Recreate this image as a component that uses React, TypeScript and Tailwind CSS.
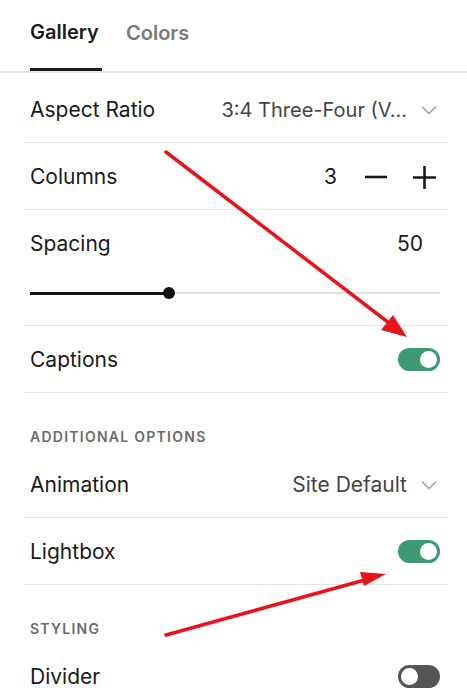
import { ReactNode } from "react";

function Chevron() {
  return (
    <svg className="mr-[3px] ml-[14px] h-[10px] w-[16px]" viewBox="0 0 16 10" fill="none">
      <path d="M1 1.5l7 7 7-7" stroke="#a3a3a3" strokeWidth="1.6" />
    </svg>
  );
}

function Toggle({ on }: { on: boolean }) {
  return (
    <div
      className={`-mt-[2px] flex h-[23px] w-[42px] items-center rounded-full px-[3px] ${
        on ? "justify-end bg-[#3d9a72]" : "justify-start bg-[#555555]"
      }`}
    >
      <div className="h-[17px] w-[17px] rounded-full bg-white" />
    </div>
  );
}

function Row({ label, children }: { label: string; children?: ReactNode }) {
  return (
    <div className="flex h-[67px] items-center justify-between border-b border-[#e6e6e6] pt-[2px] pr-[8px] pl-[6px]">
      <span>{label}</span>
      <div className="flex items-center">{children}</div>
    </div>
  );
}

function SectionLabel({ text }: { text: string }) {
  return (
    <div className="h-[58px] px-[6px] pt-[36px] text-[14px] leading-[16px] font-semibold tracking-[0.09em] text-[#6b6b6b]">
      {text}
    </div>
  );
}

export default function App() {
  return (
    <div
      className="relative h-[688px] w-[467px] overflow-hidden bg-white text-[21px] text-[#1a1a1a]"
      style={{ fontFamily: "Inter, 'Liberation Sans', sans-serif" }}
    >
      <div className="flex h-[73px] gap-[24px] border-b-2 border-[#e4e4e4] px-[30px]">
        <div className="flex flex-col">
          <div className="flex h-[70px] items-center pb-[4px] text-[20px] font-semibold">Gallery</div>
          <div className="h-[3px] w-[72px] bg-[#1a1a1a]" />
        </div>
        <div className="flex h-[70px] items-center pb-[4px] text-[20px] font-semibold text-[#7a7a7a]">Colors</div>
      </div>

      <div className="mx-[24px] w-[424px]">
        <div className="flex h-[70px] items-center justify-between border-b border-[#e6e6e6] pt-[4px] pr-[8px] pl-[6px]">
          <span>Aspect Ratio</span>
          <div className="flex items-center text-[#444]">
            <span className="text-[20px]">3:4 Three-Four (V...</span>
            <Chevron />
          </div>
        </div>

        <Row label="Columns">
          <span className="mr-[28px]">3</span>
          <svg className="h-[22px] w-[22px]" viewBox="0 0 22 22">
            <path d="M0 11h22" stroke="#1a1a1a" strokeWidth="2.6" />
          </svg>
          <svg className="mr-[4px] ml-[26px] h-[23px] w-[23px]" viewBox="0 0 23 23">
            <path d="M0 11.5h23M11.5 0v23" stroke="#1a1a1a" strokeWidth="2.6" />
          </svg>
        </Row>

        <div className="h-[116px] border-b border-[#e6e6e6] px-[6px] pt-[22px]">
          <div className="flex h-[24px] items-center justify-between leading-[24px]">
            <span>Spacing</span>
            <span className="mr-[19px]">50</span>
          </div>
          <div className="relative mt-[31px] h-[12px]">
            <div className="absolute top-[5px] left-0 h-[2px] w-[410px] bg-[#e2e2e2]" />
            <div className="absolute top-[4.5px] left-0 h-[3px] w-[139px] bg-[#111]" />
            <div className="absolute top-0 left-[133px] h-[12px] w-[12px] rounded-full bg-[#111]" />
          </div>
        </div>

        <Row label="Captions">
          <Toggle on />
        </Row>

        <SectionLabel text="ADDITIONAL OPTIONS" />

        <Row label="Animation">
          <span className="text-[#444]">Site Default</span>
          <Chevron />
        </Row>

        <Row label="Lightbox">
          <Toggle on />
        </Row>

        <SectionLabel text="STYLING" />

        <Row label="Divider">
          <Toggle on={false} />
        </Row>
      </div>

      <svg className="pointer-events-none absolute inset-0" width="467" height="688" viewBox="0 0 467 688">
        <line x1="166" y1="152" x2="393" y2="326" stroke="#e8141b" strokeWidth="3.5" strokeLinecap="round" />
        <polygon points="407,337 381,330 393,315" fill="#e8141b" />
        <line x1="166" y1="635" x2="372" y2="578" stroke="#e8141b" strokeWidth="3.5" strokeLinecap="round" />
        <polygon points="386,574 364,586 360,572" fill="#e8141b" />
      </svg>
    </div>
  );
}
